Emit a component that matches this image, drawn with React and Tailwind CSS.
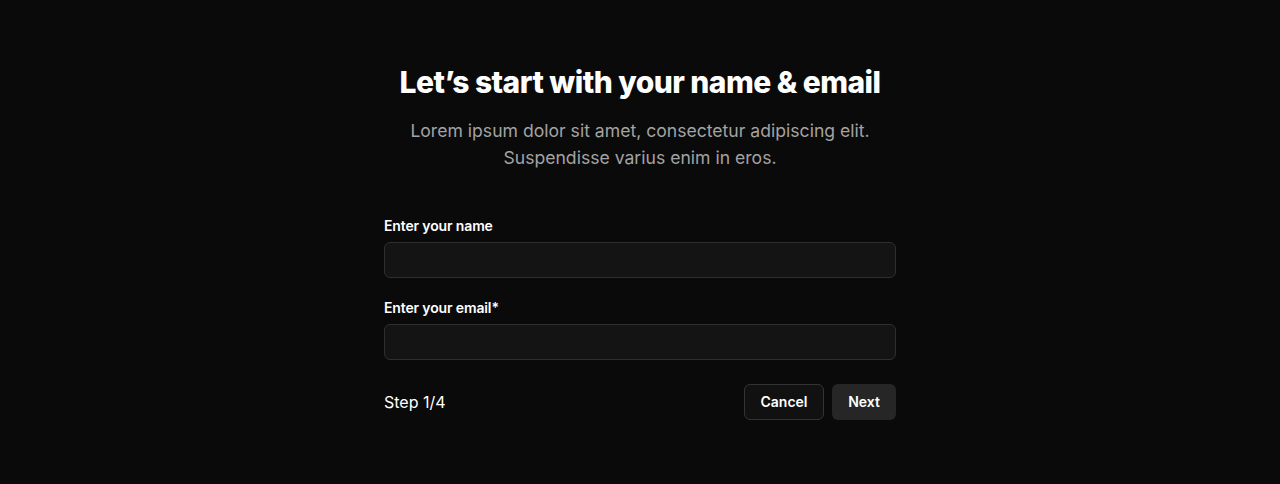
export default function App() {
  return (
    <div
      className="min-h-screen bg-[#0a0a0a] py-16 text-white"
      style={{ fontFamily: 'Inter, "Noto Sans", sans-serif' }}
    >
      <div className="mx-auto w-[512px]">
        <header className="text-center">
          <h1 className="text-[30px] leading-9 font-extrabold tracking-[-0.018em]">
            Let’s start with your name &amp; email
          </h1>
          <p className="mt-[17px] text-[17.6px] leading-[27px] text-[#a3a3a3]">
            Lorem ipsum dolor sit amet, consectetur adipiscing elit.
            <br />
            Suspendisse varius enim in eros.
          </p>
        </header>

        <form className="mt-[45px]" onSubmit={(e) => e.preventDefault()}>
          <label className="block">
            <span className="block text-sm leading-5 font-semibold tracking-[-0.01em]">Enter your name</span>
            <input
              type="text"
              className="mt-1.5 block h-9 w-full rounded-md border border-[#2e2e2e] bg-[#141414] px-3 text-sm text-white outline-none"
            />
          </label>

          <label className="mt-5 block">
            <span className="block text-sm leading-5 font-semibold tracking-[-0.01em]">Enter your email*</span>
            <input
              type="email"
              className="mt-1.5 block h-9 w-full rounded-md border border-[#2e2e2e] bg-[#141414] px-3 text-sm text-white outline-none"
            />
          </label>

          <div className="mt-6 flex items-center justify-between">
            <span className="text-base">Step 1/4</span>
            <div className="flex gap-2">
              <button
                type="button"
                className="h-9 w-20 rounded-md border border-[#333333] bg-[#111111] text-sm font-semibold"
              >
                Cancel
              </button>
              <button
                type="submit"
                className="h-9 w-16 rounded-md bg-[#262626] text-sm font-semibold"
              >
                Next
              </button>
            </div>
          </div>
        </form>
      </div>
    </div>
  );
}
